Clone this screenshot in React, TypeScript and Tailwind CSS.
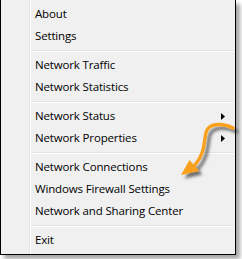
import React from "react";

type Entry = { label?: string; sub?: boolean; sep?: boolean };

const entries: Entry[] = [
  { label: "About" },
  { label: "Settings" },
  { sep: true },
  { label: "Network Traffic" },
  { label: "Network Statistics" },
  { sep: true },
  { label: "Network Status", sub: true },
  { label: "Network Properties", sub: true },
  { sep: true },
  { label: "Network Connections" },
  { label: "Windows Firewall Settings" },
  { label: "Network and Sharing Center" },
  { sep: true },
  { label: "Exit" },
];

function SubArrow() {
  return (
    <svg width="4" height="7" viewBox="0 0 4 7" className="block">
      <polygon points="0,0 4,3.5 0,7" fill="#000" />
    </svg>
  );
}

export default function App() {
  return (
    <div className="relative w-[242px] h-[259px] bg-white overflow-hidden">
      <div
        className="flex w-[236px] h-[255px] bg-[#f0f0f0] border-l border-r border-b border-black shadow-[4px_4px_4px_rgba(0,0,0,0.35)]"
        style={{ fontFamily: '"Open Sans", "Noto Sans", sans-serif' }}
      >
        <div className="w-[28px] shrink-0" />
        <div className="w-px shrink-0 bg-[#e2e3e3]" />
        <div className="w-px shrink-0 bg-white" />
        <div className="flex-1 flex flex-col pt-[3px] pb-[3px]">
          {entries.map((e, i) =>
            e.sep ? (
              <div key={i} className="h-[7px] pt-[3px] mr-px">
                <div className="h-px bg-[#e2e3e3]" />
                <div className="h-px bg-white" />
              </div>
            ) : (
              <div
                key={i}
                className="h-[22px] flex items-center justify-between pl-[4px] pr-[10px] text-[11.5px] tracking-[-0.15px] text-black leading-none"
              >
                <span>{e.label}</span>
                {e.sub && <SubArrow />}
              </div>
            )
          )}
        </div>
      </div>
      <svg
        className="absolute left-0 top-0 pointer-events-none"
        width="242"
        height="259"
        viewBox="0 0 242 259"
      >
        <defs>
          <filter id="sh" x="-50%" y="-50%" width="200%" height="200%">
            <feDropShadow dx="3.5" dy="3.5" stdDeviation="1.6" floodColor="#000" floodOpacity="0.55" />
          </filter>
        </defs>
        <g filter="url(#sh)">
          <path
            d="M 233 128 C 223 123, 211 123, 207 130 C 203 138, 207 151, 195 165"
            fill="none"
            stroke="#f9a01b"
            strokeWidth="3.4"
            strokeLinecap="round"
          />
          <polygon points="181,175 189.5,160 199,171" fill="#f9a01b" />
        </g>
      </svg>
    </div>
  );
}
